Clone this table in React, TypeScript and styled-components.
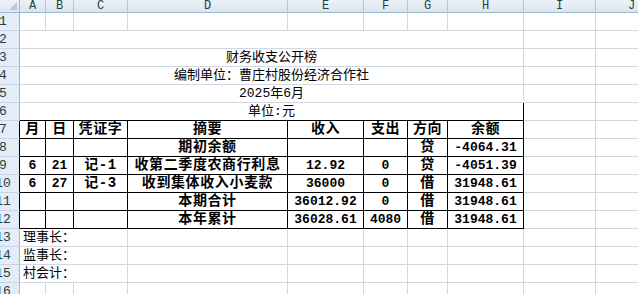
import React from 'react'
import styled, { createGlobalStyle } from 'styled-components'

const GlobalStyle = createGlobalStyle`
    html, body {
        margin: 0;
        padding: 0;
        background: #fff;
        overflow: hidden;
    }
`

const GRID = '#d0d7e5'
const INK = '#000'
const COL_W = [26, 28, 54, 160, 76, 44, 40, 76, 72, 72]
const LETTERS = ['A', 'B', 'C', 'D', 'E', 'F', 'G', 'H', 'I', 'J']

type Align = 'left' | 'center'

interface CellData {
    text?: string
    span?: number
    align?: Align
    bold?: boolean
    num?: boolean
    ink?: boolean
}

const tableRows: string[][] = [
    ['月', '日', '凭证字', '摘要', '收入', '支出', '方向', '余额'],
    ['', '', '', '期初余额', '', '', '贷', '-4064.31'],
    ['6', '21', '记-1', '收第二季度农商行利息', '12.92', '0', '贷', '-4051.39'],
    ['6', '27', '记-3', '收到集体收入小麦款', '36000', '0', '借', '31948.61'],
    ['', '', '', '本期合计', '36012.92', '0', '借', '31948.61'],
    ['', '', '', '本年累计', '36028.61', '4080', '借', '31948.61'],
]

const isNum = (s: string) => /^-?[0-9.]+$/.test(s)

const plain = (n: number): CellData[] => Array.from({ length: n }, () => ({}))

const titleRow = (text: string, inkBottom = false): CellData[] => [
    { text, span: 8, align: 'center', ink: inkBottom },
    {},
    {},
]

const buildRows = (): { cells: CellData[]; edge?: boolean }[] => {
    const rows: { cells: CellData[]; edge?: boolean }[] = []
    rows.push({ cells: plain(10) })
    rows.push({ cells: titleRow('') })
    rows.push({ cells: titleRow('财务收支公开榜') })
    rows.push({ cells: titleRow('编制单位：曹庄村股份经济合作社') })
    rows.push({ cells: titleRow('2025年6月') })
    rows.push({ cells: titleRow('单位:元', true) })
    tableRows.forEach((r) => {
        rows.push({
            edge: true,
            cells: [
                ...r.map((t) => ({
                    text: t,
                    align: 'center' as Align,
                    bold: true,
                    num: isNum(t),
                    ink: true,
                })),
                {},
                {},
            ],
        })
    })
    ;['理事长：', '监事长：', '村会计：'].forEach((t) => {
        rows.push({ cells: [{ text: t, span: 3, align: 'left' }, ...plain(7)] })
    })
    rows.push({ cells: plain(10) })
    return rows
}

const App = () => {
    const rows = buildRows()
    return (
        <>
            <GlobalStyle />
            <Sheet>
                <Corner />
                {LETTERS.map((l) => (
                    <ColHead key={l}>{l}</ColHead>
                ))}
                {rows.map((row, i) => (
                    <React.Fragment key={i}>
                        <RowHead $edge={row.edge}>
                            <RowNum>{i + 1}</RowNum>
                        </RowHead>
                        {row.cells.map((c, j) => (
                            <Cell
                                key={j}
                                $span={c.span || 1}
                                $align={c.align || 'left'}
                                $bold={c.bold}
                                $num={c.num}
                                $ink={c.ink}
                            >
                                {c.text}
                            </Cell>
                        ))}
                    </React.Fragment>
                ))}
            </Sheet>
        </>
    )
}

export default App

const Sheet = styled.div`
    display: grid;
    grid-template-columns: 20px ${COL_W.map((w) => `${w}px`).join(' ')};
    grid-template-rows: 13px repeat(16, 18px);
    width: max-content;
    font-family: 'Noto Sans CJK SC', 'Liberation Sans', sans-serif;
    color: #000;
`

const Corner = styled.div`
    position: relative;
    box-sizing: border-box;
    background: linear-gradient(#eef3fa, #dde6f2);
    border-right: 1px solid #9eb6ce;
    border-bottom: 1px solid #9eb6ce;

    &::after {
        content: '';
        position: absolute;
        right: 2px;
        bottom: 2px;
        width: 0;
        height: 0;
        border-left: 8px solid transparent;
        border-bottom: 8px solid #b9c9dc;
    }
`

const ColHead = styled.div`
    box-sizing: border-box;
    display: flex;
    align-items: center;
    justify-content: center;
    background: linear-gradient(#edf2f9, #dbe4f0);
    border-right: 1px solid #b8c8dc;
    border-bottom: 1px solid #9eb6ce;
    font-family: 'Liberation Mono', monospace;
    font-size: 12px;
    line-height: 12px;
    color: #27413e;
`

const RowHead = styled.div<{ $edge?: boolean }>`
    box-sizing: border-box;
    display: flex;
    align-items: center;
    background: #e4ecf7;
    border-right: 1px solid ${({ $edge }) => ($edge ? INK : '#9eb6ce')};
    border-bottom: 1px solid #c8d5e6;
    overflow: hidden;
`

const RowNum = styled.span`
    flex: none;
    width: 32px;
    margin-left: -13px;
    text-align: center;
    font-family: 'Liberation Mono', monospace;
    font-size: 13px;
    color: #27413e;
`

const Cell = styled.div<{
    $span: number
    $align: Align
    $bold?: boolean
    $num?: boolean
    $ink?: boolean
}>`
    grid-column: span ${({ $span }) => $span};
    box-sizing: border-box;
    display: flex;
    align-items: center;
    justify-content: ${({ $align }) => ($align === 'center' ? 'center' : 'flex-start')};
    padding-left: ${({ $align }) => ($align === 'left' ? '3px' : '0')};
    border-right: 1px solid ${({ $ink }) => ($ink ? INK : GRID)};
    border-bottom: 1px solid ${({ $ink }) => ($ink ? INK : GRID)};
    white-space: nowrap;
    font-family: ${({ $num }) =>
        $num
            ? "'Liberation Mono', monospace"
            : "'Liberation Mono', 'Noto Sans CJK SC', sans-serif"};
    font-size: ${({ $bold, $num }) => ($num ? '13px' : $bold ? '14px' : '13px')};
    font-weight: ${({ $bold }) => ($bold ? 700 : 400)};
    letter-spacing: ${({ $bold, $num }) => ($bold && !$num ? '0.6px' : '0')};
    line-height: 17px;
`
